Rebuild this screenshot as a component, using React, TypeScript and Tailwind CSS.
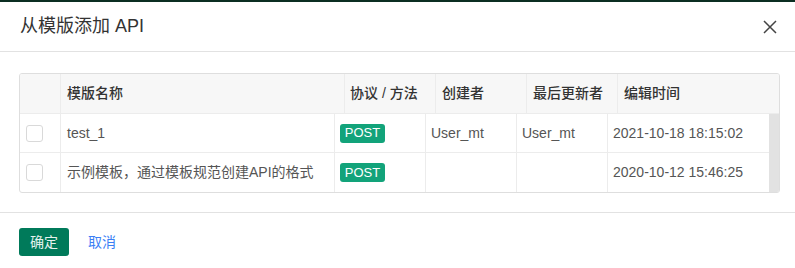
import React from 'react';

interface TemplateRow {
  name: string;
  method: string;
  creator: string;
  updater: string;
  time: string;
}

const rows: TemplateRow[] = [
  { name: 'test_1', method: 'POST', creator: 'User_mt', updater: 'User_mt', time: '2021-10-18 18:15:02' },
  { name: '示例模板，通过模板规范创建API的格式', method: 'POST', creator: '', updater: '', time: '2020-10-12 15:46:25' },
];

export default function App() {
  return (
    <div
      className="w-[795px] h-[268px] bg-white overflow-hidden"
      style={{ fontFamily: '"Liberation Sans", "Noto Sans CJK SC", sans-serif' }}
    >
      <div className="h-[2px] bg-[#0b2e22]" />
      {/* Header */}
      <div className="h-[50px] flex items-center justify-between pl-[20px] pr-[18px] border-b border-[#e2e2e2]">
        <span className="text-[18px] text-[#333]">从模版添加 API</span>
        <svg width="14" height="14" viewBox="0 0 14 14" className="text-[#444]">
          <path d="M1 1L13 13M13 1L1 13" stroke="currentColor" strokeWidth="1.5" fill="none" />
        </svg>
      </div>
      {/* Table */}
      <div className="pl-[19px] pr-[15px] pt-[21px] pb-[19px] border-b border-[#e2e2e2]">
        <div className="border border-[#dedede] rounded-[3px] overflow-hidden text-[14px]">
          <div className="h-[40px] flex bg-[#f7f7f7] border-b border-[#ececec] text-[#333] font-medium">
            <div className="w-[41px] border-r border-[#ececec]" />
            <div className="w-[284px] border-r border-[#ececec] flex items-center pl-[6px]">模版名称</div>
            <div className="w-[91px] border-r border-[#ececec] flex items-center pl-[5px]">协议 / 方法</div>
            <div className="w-[91px] border-r border-[#ececec] flex items-center pl-[6px]">创建者</div>
            <div className="w-[91px] border-r border-[#ececec] flex items-center pl-[6px]">最后更新者</div>
            <div className="flex-1 flex items-center pl-[6px]">编辑时间</div>
          </div>
          <div className="flex">
            <div className="flex-1">
              {rows.map((row, i) => (
                <div
                  key={i}
                  className={`h-[39px] flex text-[#555] ${i < rows.length - 1 ? 'border-b border-[#ececec]' : ''}`}
                >
                  <div className="w-[41px] border-r border-[#ececec] flex items-center pl-[6px]">
                    <div className="w-[17px] h-[17px] border border-[#d9d9d9] rounded-[3px] bg-white" />
                  </div>
                  <div className="w-[274px] border-r border-[#ececec] flex items-center pl-[6px]">{row.name}</div>
                  <div className="w-[91px] border-r border-[#ececec] flex items-center pl-[5px]">
                    <span className="h-[19px] w-[45px] justify-center rounded-[3px] bg-[#12a37a] text-white text-[13px] flex items-center">
                      {row.method}
                    </span>
                  </div>
                  <div className="w-[91px] border-r border-[#ececec] flex items-center pl-[5px]">{row.creator}</div>
                  <div className="w-[91px] border-r border-[#ececec] flex items-center pl-[5px]">{row.updater}</div>
                  <div className="flex-1 flex items-center pl-[5px]">{row.time}</div>
                </div>
              ))}
            </div>
            <div className="w-[10px] bg-[#e2e2e2]" />
          </div>
        </div>
      </div>
      {/* Footer */}
      <div className="flex items-center gap-[19px] pl-[19px] pt-[15px]">
        <button className="h-[28px] w-[50px] rounded-[3px] bg-[#007a5a] text-white/90 text-[14px]">确定</button>
        <span className="text-[14px] text-[#3b7ff5]">取消</span>
      </div>
    </div>
  );
}
